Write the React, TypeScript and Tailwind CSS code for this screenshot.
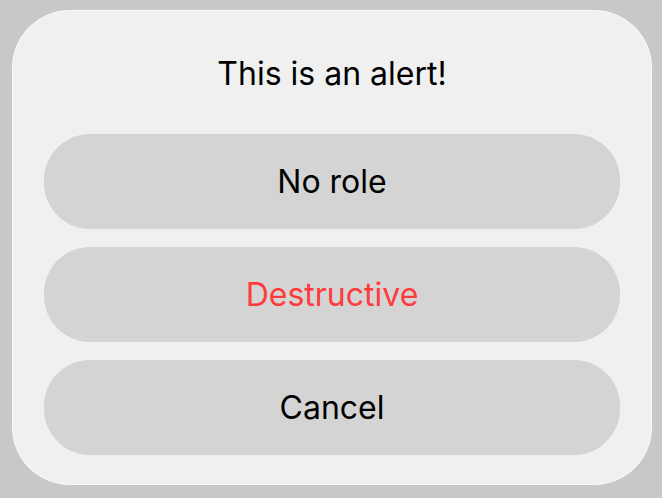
type AlertAction = {
  label: string
  role?: 'destructive' | 'cancel'
}

const actions: AlertAction[] = [
  { label: 'No role' },
  { label: 'Destructive', role: 'destructive' },
  { label: 'Cancel', role: 'cancel' },
]

function AlertButton({ action }: { action: AlertAction }) {
  return (
    <button
      className={
        'h-[95px] w-full rounded-[46px] bg-[#d4d4d4] text-[32px] leading-[40px] ' +
        (action.role === 'destructive' ? 'text-[#ff3b3b]' : 'text-black')
      }
    >
      {action.label}
    </button>
  )
}

export default function App() {
  return (
    <div
      className="h-[498px] w-[662px] bg-[#c8c8c8] pl-[12px] pt-[10px]"
      style={{ fontFamily: 'Inter, "Noto Sans", sans-serif' }}
    >
      <div className="flex h-[475px] w-[640px] flex-col rounded-[58px] border border-white/70 bg-[#f0f0f0] px-[31px] pb-[32px]">
        <h1 className="pt-[43px] pb-[40px] text-center text-[32px] leading-[40px] text-black">
          This is an alert!
        </h1>
        <div className="flex flex-col gap-[18px]">
          {actions.map((a) => (
            <AlertButton key={a.label} action={a} />
          ))}
        </div>
      </div>
    </div>
  )
}
